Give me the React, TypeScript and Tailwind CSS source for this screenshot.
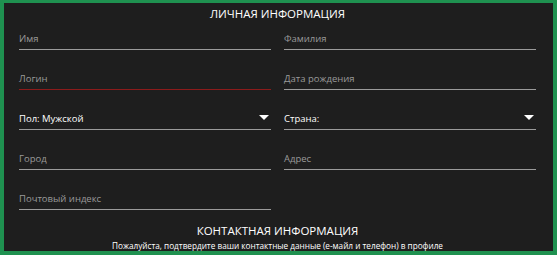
import React from 'react';

const Field = ({ label, value, error, select }: { label?: string; value?: string; error?: boolean; select?: boolean }) => (
  <div className={`h-[40px] flex items-end border-b ${error ? 'border-[#8c1b1b]' : 'border-[#9b9b9b]'}`}>
    <div className="flex w-full items-center justify-between pb-[6px]">
      {value ? (
        <span className="text-[9.5px] text-white leading-none">{value}</span>
      ) : (
        <span className="text-[9.5px] text-[#9a9a9a] leading-none">{label}</span>
      )}
      {select && (
        <svg width="10" height="6" viewBox="0 0 10 6" className="mr-[2px]">
          <path d="M0 0 L10 0 L5 5 Z" fill="#ffffff" />
        </svg>
      )}
    </div>
  </div>
);

export default function App() {
  return (
    <div className="w-[557px] h-[255px] bg-[#1f9150] pl-[4px] pr-[4px] pt-[3px] pb-[4px]" style={{ fontFamily: '"Open Sans", sans-serif' }}>
      <div className="w-full h-full bg-[#1e1e1e] pl-[15px] pr-[17px] overflow-hidden">
        <h2 className="text-center text-white text-[11.5px] pt-[3px] leading-[16px]">ЛИЧНАЯ ИНФОРМАЦИЯ</h2>
        <div className="grid grid-cols-2 gap-x-[13px] -mt-[12px]">
          <Field label="Имя" />
          <Field label="Фамилия" />
          <Field label="Логин" error />
          <Field label="Дата рождения" />
          <Field value="Пол: Мужской" select />
          <Field value="Страна:" select />
          <Field label="Город" />
          <Field label="Адрес" />
          <Field label="Почтовый индекс" />
          <div />
        </div>
        <h2 className="text-center text-white text-[11.5px] mt-[13px] leading-[16px]">КОНТАКТНАЯ ИНФОРМАЦИЯ</h2>
        <p className="text-center text-white text-[8.2px] mt-[1px] leading-[12px]">
          Пожалуйста, подтвердите ваши контактные данные (е-майл и телефон) в профиле
        </p>
      </div>
    </div>
  );
}
